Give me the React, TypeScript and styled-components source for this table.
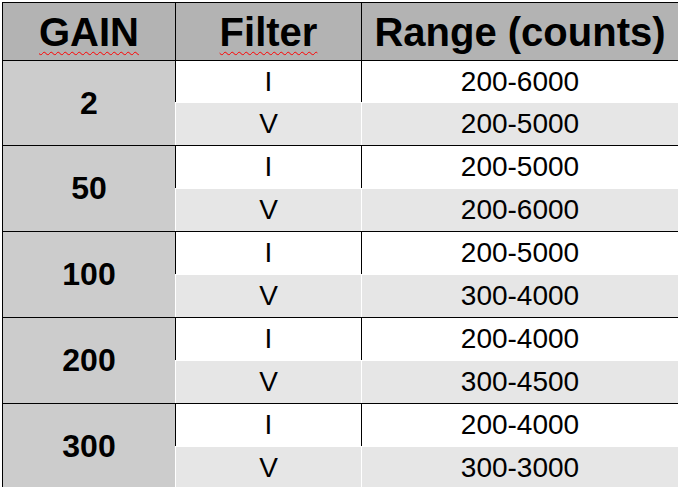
import React from 'react'
import styled, { createGlobalStyle } from 'styled-components'

const GlobalStyle = createGlobalStyle`
  html, body {
    margin: 0;
    padding: 0;
    background: #fff;
    overflow: hidden;
  }
  body {
    font-family: 'Liberation Sans', Arial, sans-serif;
  }
`

const groups = [
  { gain: '2', ranges: ['200-6000', '200-5000'] },
  { gain: '50', ranges: ['200-5000', '200-6000'] },
  { gain: '100', ranges: ['200-5000', '300-4000'] },
  { gain: '200', ranges: ['200-4000', '300-4500'] },
  { gain: '300', ranges: ['200-4000', '300-3000'] },
]

const Sheet = styled.div`
  width: 678px;
  height: 487px;
  padding: 2px 0 0 2px;
  box-sizing: border-box;
  overflow: hidden;
`

const Table = styled.table`
  border-collapse: collapse;
  table-layout: fixed;
  width: 676px;
  color: #000;

  th:last-child,
  td:last-child {
    border-right: none;
  }

  tbody tr:first-child td {
    height: 41px;
  }
`

const HeadCell = styled.th<{ $spell?: boolean }>`
  height: 57px;
  padding: 0;
  background: #b3b3b3;
  border: 1px solid #000;
  font-size: 40px;
  font-weight: bold;
  line-height: 40px;
  text-align: center;
  white-space: nowrap;

  span {
    text-decoration: ${p => (p.$spell ? 'underline wavy #ff0000' : 'none')};
    text-decoration-thickness: 1px;
    text-underline-offset: 5px;
  }
`

const GainCell = styled.td`
  padding: 0;
  background: #cccccc;
  border-top: 1px solid #000;
  border-bottom: 1px solid #000;
  border-left: 1px solid #000;
  border-right: none;
  font-size: 32px;
  font-weight: bold;
  text-align: center;
`

const ValueCell = styled.td<{ $shade?: boolean }>`
  height: 42px;
  padding: 0;
  font-size: 28px;
  line-height: 28px;
  text-align: center;
  background: ${p => (p.$shade ? '#e6e6e6' : '#ffffff')};
  border-left: 1px solid ${p => (p.$shade ? '#fff' : '#000')};
  border-right: 1px solid ${p => (p.$shade ? '#fff' : '#000')};
  border-top: 1px solid ${p => (p.$shade ? '#fff' : '#000')};
  border-bottom: 1px solid ${p => (p.$shade ? '#000' : '#fff')};
`

export default function App() {
  return (
    <Sheet>
      <GlobalStyle />
      <Table>
        <colgroup>
          <col style={{ width: 173 }} />
          <col style={{ width: 186 }} />
          <col />
        </colgroup>
        <thead>
          <tr>
            <HeadCell $spell><span>GAIN</span></HeadCell>
            <HeadCell $spell><span>Filter</span></HeadCell>
            <HeadCell><span>Range (counts)</span></HeadCell>
          </tr>
        </thead>
        <tbody>
          {groups.map(g => (
            <React.Fragment key={g.gain}>
              <tr>
                <GainCell rowSpan={2}>{g.gain}</GainCell>
                <ValueCell>I</ValueCell>
                <ValueCell>{g.ranges[0]}</ValueCell>
              </tr>
              <tr>
                <ValueCell $shade>V</ValueCell>
                <ValueCell $shade>{g.ranges[1]}</ValueCell>
              </tr>
            </React.Fragment>
          ))}
        </tbody>
      </Table>
    </Sheet>
  )
}
